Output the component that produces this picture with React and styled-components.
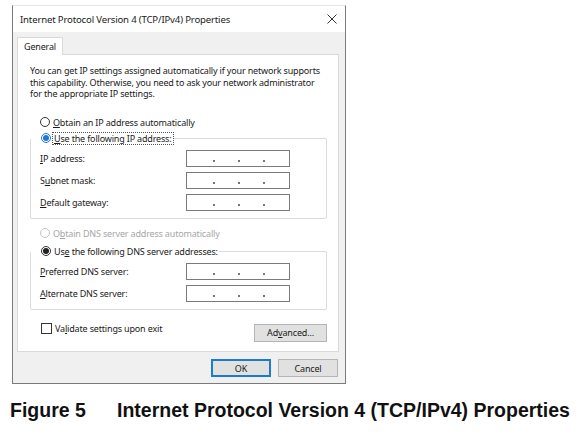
import React from 'react';
import styled, { createGlobalStyle } from 'styled-components';

const GlobalStyle = createGlobalStyle`
  html, body {
    margin: 0;
    padding: 0;
    background: #fff;
  }
  body {
    font-family: "Liberation Sans", Arial, sans-serif;
  }
`;

const Page = styled.div`
  width: 581px;
  height: 435px;
  overflow: hidden;
  padding-top: 5px;
  box-sizing: border-box;
`;

const Window = styled.div`
  margin-left: 12px;
  width: 334px;
  height: 379px;
  box-sizing: border-box;
  border: 1px solid #7a7a7a;
  border-top-color: #e6e6e6;
  display: flex;
  flex-direction: column;
  font-family: "Noto Sans", "Open Sans", sans-serif;
  font-size: 9px;
  letter-spacing: -0.17px;
  color: #1a1a1a;
`;

const TitleBar = styled.div`
  height: 26px;
  background: #fff;
  display: flex;
  align-items: center;
  justify-content: space-between;
  padding: 0 8px 0 7px;
  font-size: 9.6px;
  color: #222;
`;

const Body = styled.div`
  flex: 1;
  background: #f0f0f0;
  padding: 5px 6px 0 4px;
  display: flex;
  flex-direction: column;
`;

const Tab = styled.div`
  align-self: flex-start;
  height: 17px;
  padding: 0 6px;
  display: flex;
  align-items: center;
  background: #fff;
  border: 1px solid #d9d9d9;
  border-bottom: none;
  position: relative;
  z-index: 1;
  margin-bottom: -1px;
`;

const Panel = styled.div`
  height: 298px;
  background: #fff;
  border: 1px solid #d9d9d9;
  box-sizing: border-box;
  padding: 10px 10px 0 12px;
  display: flex;
  flex-direction: column;
`;

const Intro = styled.p`
  margin: 0;
  line-height: 11.5px;
  white-space: nowrap;
`;

const RadioRow = styled.label`
  display: flex;
  align-items: center;
  gap: 2px;
  height: 13px;
  padding-left: 10px;
  color: ${p => (p.disabled ? '#a6a6a6' : 'inherit')};
  margin-top: ${p => p.mt || 0}px;
`;

const RadioDot = styled.span`
  width: 10px;
  height: 10px;
  border-radius: 50%;
  box-sizing: border-box;
  border: 1px solid ${p => (p.disabled ? '#c4c4c4' : p.focus ? '#2a7ad2' : '#333')};
  display: flex;
  align-items: center;
  justify-content: center;
  background: #fff;
  &::after {
    content: '';
    display: ${p => (p.checked ? 'block' : 'none')};
    width: 6px;
    height: 6px;
    border-radius: 50%;
    background: ${p => (p.focus ? '#1f77d4' : '#222')};
  }
`;

const Focus = styled.span`
  outline: 1px dotted ${p => (p.on ? '#555' : 'transparent')};
  padding: 0 1px;
  line-height: 11px;
`;

const Group = styled.fieldset`
  margin: ${p => p.mt || 0}px 0 0 0;
  padding: 0 0 7px 0;
  width: 297px;
  box-sizing: border-box;
  border: 1px solid #dcdcdc;
  border-radius: 2px;
  display: flex;
  flex-direction: column;
  gap: 5px;
`;

const Legend = styled.legend`
  padding: 0;
  margin-left: 0;
`;

const FieldRow = styled.div`
  display: flex;
  align-items: center;
  justify-content: space-between;
  padding-left: 9px;
  padding-right: 36px;
  height: 17px;
  &:first-of-type {
    margin-top: 5px;
  }
`;

const IpBox = styled.div`
  width: 104px;
  height: 17px;
  box-sizing: border-box;
  border: 1px solid #7a7a7a;
  display: grid;
  grid-template-columns: repeat(3, 25px);
  justify-content: center;
  align-items: end;
  padding-bottom: 4px;
  padding-left: 1px;
  span {
    width: 2px;
    height: 2px;
    background: #777;
    justify-self: center;
  }
`;

const Footer = styled.div`
  display: flex;
  align-items: center;
  justify-content: space-between;
  margin-top: 14px;
  padding-left: 11px;
  padding-right: 1px;
`;

const CheckLabel = styled.label`
  display: flex;
  align-items: center;
  gap: 3px;
  margin-top: -9px;
`;

const CheckBox = styled.span`
  width: 11px;
  height: 11px;
  box-sizing: border-box;
  border: 1px solid #333;
  background: #fff;
`;

const Button = styled.div`
  width: ${p => p.w || 60}px;
  height: 18px;
  box-sizing: border-box;
  background: #e1e1e1;
  border: 1px solid ${p => (p.primary ? '#1c7ad1' : '#b5b5b5')};
  box-shadow: ${p => (p.primary ? 'inset 0 0 0 1px #1c7ad1' : 'none')};
  display: flex;
  align-items: center;
  justify-content: center;
`;

const Buttons = styled.div`
  display: flex;
  justify-content: flex-end;
  gap: 7px;
  margin-top: 7px;
  padding-right: 1px;
`;

const U = styled.span`
  text-decoration: underline;
  text-underline-offset: 1px;
`;

const Caption = styled.div`
  margin-top: 15px;
  margin-left: 10px;
  display: flex;
  font-family: "Liberation Sans", Arial, sans-serif;
  font-weight: bold;
  font-size: 19.5px;
  color: #111;
`;

const CaptionNum = styled.span`
  width: 107px;
`;

const CloseIcon = () => (
  <svg width="10" height="10" viewBox="0 0 10 10">
    <path d="M0.5 0.5 L9.5 9.5 M9.5 0.5 L0.5 9.5" stroke="#333" strokeWidth="1" />
  </svg>
);

const Radio = ({ checked, focus, disabled, focusBox, children, mt }) => (
  <RadioRow disabled={disabled} mt={mt}>
    <RadioDot checked={checked} focus={focus} disabled={disabled} />
    <Focus on={focusBox}>{children}</Focus>
  </RadioRow>
);

const IpField = ({ label }) => (
  <FieldRow>
    <span>{label}</span>
    <IpBox>
      <span />
      <span />
      <span />
    </IpBox>
  </FieldRow>
);

export default function App() {
  return (
    <Page>
      <GlobalStyle />
      <Window>
        <TitleBar>
          <span>Internet Protocol Version 4 (TCP/IPv4) Properties</span>
          <CloseIcon />
        </TitleBar>
        <Body>
          <Tab>General</Tab>
          <Panel>
            <Intro>
              You can get IP settings assigned automatically if your network supports<br />
              this capability. Otherwise, you need to ask your network administrator<br />
              for the appropriate IP settings.
            </Intro>
            <Radio mt={16}>
              <U>O</U>btain an IP address automatically
            </Radio>
            <Group mt={3}>
              <Legend>
                <Radio checked focus focusBox>
                  <U>U</U>se the following IP address:
                </Radio>
              </Legend>
              <IpField label={<><U>I</U>P address:</>} />
              <IpField label={<>S<U>u</U>bnet mask:</>} />
              <IpField label={<><U>D</U>efault gateway:</>} />
            </Group>
            <Radio disabled mt={8}>
              O<U>b</U>tain DNS server address automatically
            </Radio>
            <Group mt={5}>
              <Legend>
                <Radio checked>
                  Us<U>e</U> the following DNS server addresses:
                </Radio>
              </Legend>
              <IpField label={<><U>P</U>referred DNS server:</>} />
              <IpField label={<><U>A</U>lternate DNS server:</>} />
            </Group>
            <Footer>
              <CheckLabel>
                <CheckBox />
                <span>Va<U>l</U>idate settings upon exit</span>
              </CheckLabel>
              <Button w={73}>
                Ad<U>v</U>anced...
              </Button>
            </Footer>
          </Panel>
          <Buttons>
            <Button primary>OK</Button>
            <Button>Cancel</Button>
          </Buttons>
        </Body>
      </Window>
      <Caption>
        <CaptionNum>Figure 5</CaptionNum>
        <span>Internet Protocol Version 4 (TCP/IPv4) Properties</span>
      </Caption>
    </Page>
  );
}
